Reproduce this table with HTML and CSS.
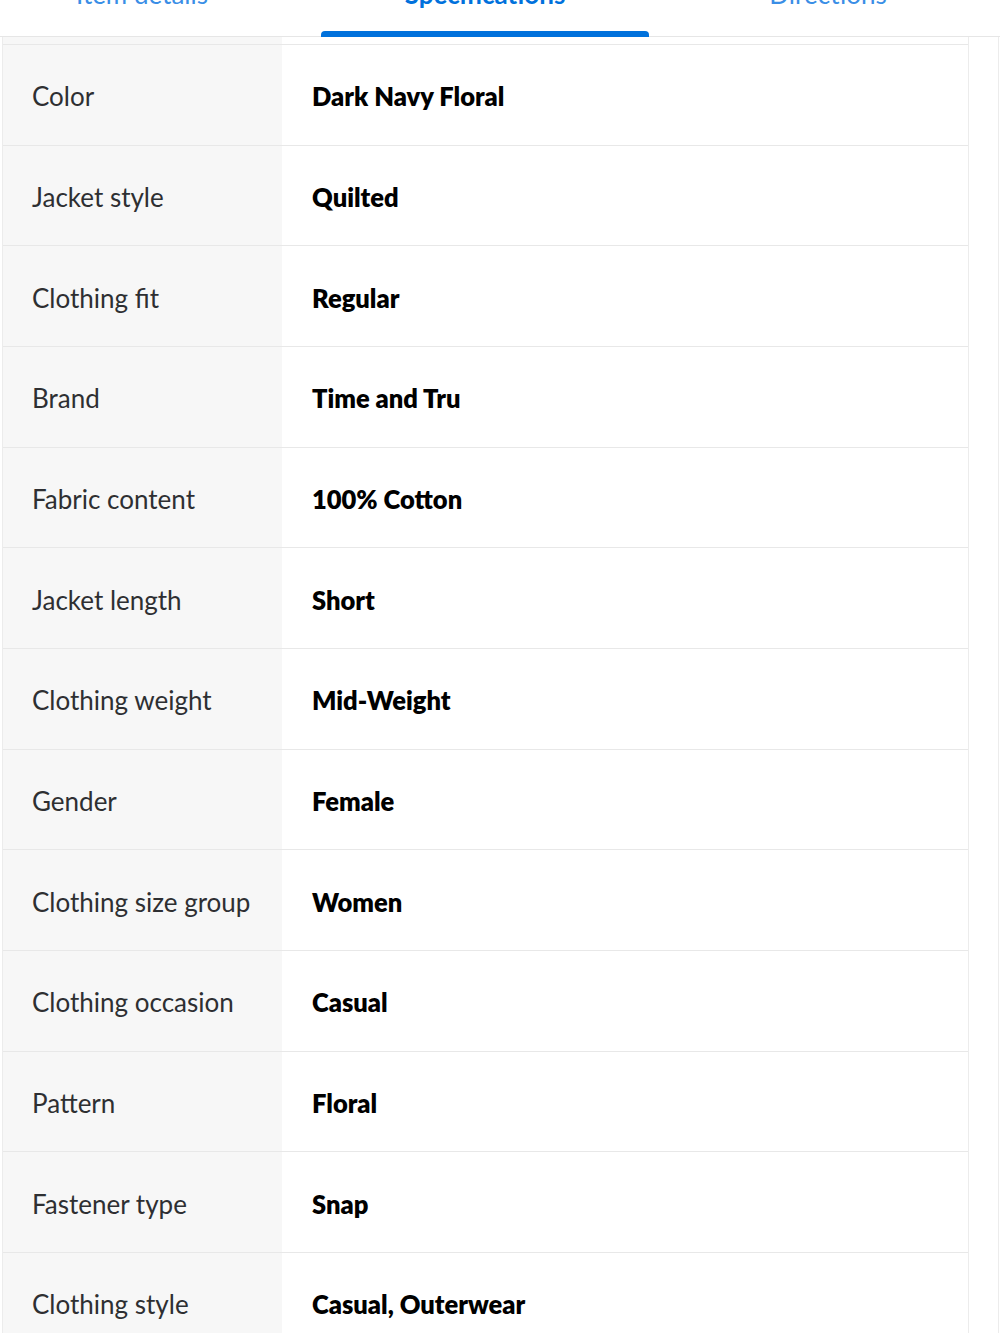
FILE: index.html
```html
<html>
	<head>
		<meta charset="utf-8" />
		<meta name="viewport" content="width=device-width, initial-scale=1">
		<title>Specifications</title>
		<link rel="stylesheet" href="styles.css">
	</head>
	<body>
		<nav class="tabs">
			<a class="tab" href="#">Item details</a>
			<a class="tab active" href="#">Specifications</a>
			<a class="tab" href="#">Directions</a>
		</nav>
		<div class="panel">
			<div class="spec-table">
				<div class="spec-row cut"><div class="spec-name"></div><div class="spec-value"></div></div>
				<div class="spec-row"><div class="spec-name">Color</div><div class="spec-value">Dark Navy Floral</div></div>
				<div class="spec-row"><div class="spec-name">Jacket style</div><div class="spec-value">Quilted</div></div>
				<div class="spec-row"><div class="spec-name">Clothing fit</div><div class="spec-value">Regular</div></div>
				<div class="spec-row"><div class="spec-name">Brand</div><div class="spec-value">Time and Tru</div></div>
				<div class="spec-row"><div class="spec-name">Fabric content</div><div class="spec-value">100% Cotton</div></div>
				<div class="spec-row"><div class="spec-name">Jacket length</div><div class="spec-value">Short</div></div>
				<div class="spec-row"><div class="spec-name">Clothing weight</div><div class="spec-value">Mid-Weight</div></div>
				<div class="spec-row"><div class="spec-name">Gender</div><div class="spec-value">Female</div></div>
				<div class="spec-row"><div class="spec-name">Clothing size group</div><div class="spec-value">Women</div></div>
				<div class="spec-row"><div class="spec-name">Clothing occasion</div><div class="spec-value">Casual</div></div>
				<div class="spec-row"><div class="spec-name">Pattern</div><div class="spec-value">Floral</div></div>
				<div class="spec-row"><div class="spec-name">Fastener type</div><div class="spec-value">Snap</div></div>
				<div class="spec-row"><div class="spec-name">Clothing style</div><div class="spec-value">Casual, Outerwear</div></div>
			</div>
		</div>
	</body>
</html>
```

FILE: styles.css
```css
body {
	margin: 0;
	background: #fff;
	font-family: Lato, "Open Sans", sans-serif;
	overflow: hidden;
}

.tabs {
	display: flex;
	gap: 15px;
	margin-top: -21px;
	margin-left: -22px;
	height: 57px;
	border-bottom: 1px solid #e6e6e6;
}

.tab {
	position: relative;
	flex: 0 0 328px;
	text-align: center;
	font-size: 26px;
	line-height: 30px;
	color: #3a8ee6;
	text-decoration: none;
}

.tab.active {
	color: #0071dc;
	font-weight: bold;
}

.tab.active::after {
	content: "";
	position: absolute;
	left: 0;
	right: 0;
	bottom: -1px;
	height: 6px;
	border-radius: 4px 4px 0 0;
	background: #0071dc;
}

.panel {
	width: 998px;
	border-right: 1px solid #ececec;
}

.spec-table {
	margin-left: 2px;
	width: 965px;
	border-left: 1px solid #ececec;
	border-right: 1px solid #ececec;
}

.spec-row {
	display: flex;
	height: 100.67px;
	box-sizing: border-box;
	border-top: 1px solid #e8e8e8;
}

.spec-row.cut {
	height: 7px;
	border-top: 0;
}

.spec-name {
	flex: 0 0 279px;
	box-sizing: border-box;
	display: flex;
	align-items: center;
	padding: 3px 0 0 29px;
	background: #f7f7f7;
	color: #2e2f32;
	font-size: 26px;
}

.spec-value {
	flex: 1;
	display: flex;
	align-items: center;
	padding: 3px 0 0 30px;
	color: #000;
	font-weight: 800;
	font-size: 25.5px;
}
```
